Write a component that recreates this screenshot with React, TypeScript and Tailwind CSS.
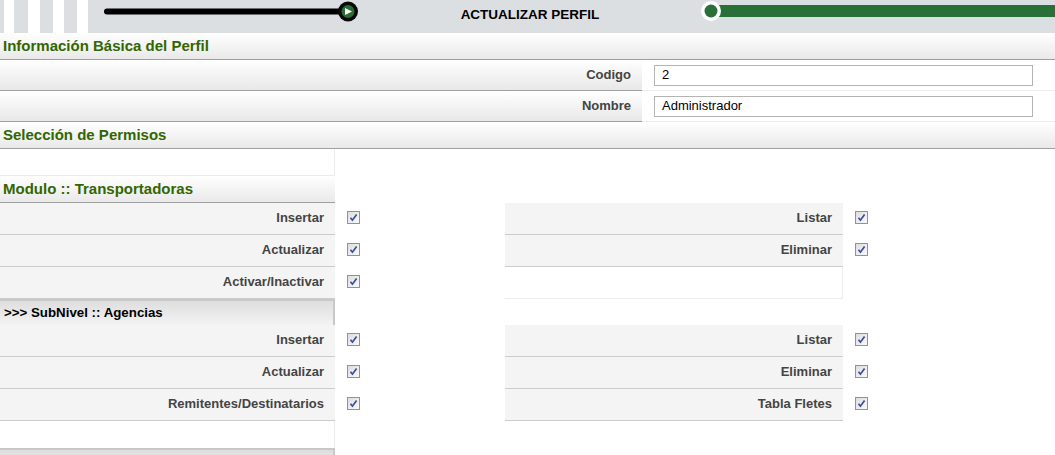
import React from 'react'

type Perm = { label: string } | null

function Check() {
  return (
    <svg width="13" height="13" viewBox="0 0 13 13">
      <defs>
        <linearGradient id="cbg" x1="0" y1="0" x2="1" y2="1">
          <stop offset="0" stopColor="#dcdcdc" />
          <stop offset="1" stopColor="#fbfbfb" />
        </linearGradient>
      </defs>
      <rect x="0.5" y="0.5" width="12" height="12" fill="url(#cbg)" stroke="#929292" />
      <path d="M3.5 6.8 L5.4 9.2 L9.6 3.4" fill="none" stroke="#3b4f9a" strokeWidth="1.7" />
    </svg>
  )
}

function Header({ title, wide }: { title: string; wide?: boolean }) {
  return (
    <div
      className={`flex items-center h-[27px] pl-[3px] border-b border-[#a0a0a0] bg-gradient-to-b from-white to-[#e9e9e9] text-[15px] font-bold text-[#336600] ${
        wide ? 'w-full' : 'w-[335px]'
      }`}
    >
      {title}
    </div>
  )
}

function SubHeader({ title }: { title: string }) {
  return (
    <div className="flex items-center h-[26px] w-[335px] pl-[4px] border-t-2 border-r-2 border-[#c8c8c8] bg-gradient-to-b from-[#dedede] to-[#f3f3f3] text-[13.3px] font-bold text-black">
      {title}
    </div>
  )
}

function PermRows({ rows }: { rows: [Perm, Perm][] }) {
  return (
    <div className="grid grid-cols-[335px_170px_338px_1fr]">
      {rows.map(([a, b], i) => (
        <React.Fragment key={i}>
          <div className="flex items-center justify-end h-[32px] pr-[11px] pb-[1px] bg-[#f4f4f4] border-b border-[#cccccc] text-[13px] font-bold text-[#444]">
            {a?.label}
          </div>
          <div className="flex items-center pl-[12px] pb-[3px] h-[32px]">{a && <Check />}</div>
          {b ? (
            <div className="flex items-center justify-end h-[32px] pr-[11px] pb-[1px] bg-[#f4f4f4] border-b border-[#cccccc] text-[13px] font-bold text-[#444]">
              {b.label}
            </div>
          ) : (
            <div className="h-[32px] bg-white border-b border-r border-[#ececec]" />
          )}
          <div className="flex items-center pl-[12px] pb-[3px] h-[32px]">{b && <Check />}</div>
        </React.Fragment>
      ))}
    </div>
  )
}

function Field({ label, value }: { label: string; value: string }) {
  return (
    <div className="flex h-[31px]">
      <div className="flex items-center justify-end w-[642px] pr-[11px] bg-gradient-to-b from-white to-[#e8e8e8] border-b border-[#a0a0a0] text-[13px] font-bold text-[#444]">
        {label}
      </div>
      <div className="flex-1 flex items-center pl-[12px] border-b border-[#ececec]">
        <div className="w-[379px] h-[21px] border border-[#b4b4b4] flex items-center pl-[7px] text-[13px] text-black">
          {value}
        </div>
      </div>
    </div>
  )
}

export default function App() {
  return (
    <div className="w-[1055px] h-[455px] overflow-hidden bg-white font-['Liberation_Sans',Arial,sans-serif]">
      {/* barra superior */}
      <div className="flex h-[33px] bg-[#dcdfe2]">
        <div className="flex h-full w-[100px]">
          <div className="ml-[4px] w-[10px] bg-white" />
          <div className="ml-[14px] w-[12px] bg-white" />
          <div className="ml-[13px] w-[11px] bg-white" />
          <div className="ml-[13px] w-[11px] bg-white" />
        </div>
        <svg width="260" height="33" viewBox="0 0 260 33">
          <line x1="7" y1="11.5" x2="240" y2="11.5" stroke="#000" strokeWidth="6" strokeLinecap="round" />
          <circle cx="248" cy="11.5" r="10" fill="#0a0a0a" />
          <circle cx="248" cy="11.5" r="6.5" fill="#2b6b35" />
          <path d="M245 8 L252 11.5 L245 15 Z" fill="#fff" />
        </svg>
        <div className="flex-1 flex items-center justify-center text-[13.5px] font-bold text-black pb-[2px]">
          ACTUALIZAR PERFIL
        </div>
        <svg width="355" height="33" viewBox="0 0 355 33">
          <rect x="18" y="5" width="337" height="12" fill="#287038" />
          <circle cx="11" cy="11" r="10" fill="#fff" />
          <circle cx="11" cy="11" r="6.5" fill="#287038" />
        </svg>
      </div>

      <Header title="Información Básica del Perfil" wide />
      <Field label="Codigo" value="2" />
      <Field label="Nombre" value="Administrador" />

      <Header title="Selección de Permisos" wide />
      <div className="h-[27px] w-[335px] border-r border-b border-[#ececec]" />

      <Header title="Modulo :: Transportadoras" />
      <PermRows
        rows={[
          [{ label: 'Insertar' }, { label: 'Listar' }],
          [{ label: 'Actualizar' }, { label: 'Eliminar' }],
          [{ label: 'Activar/Inactivar' }, null],
        ]}
      />

      <SubHeader title=">>> SubNivel :: Agencias" />
      <PermRows
        rows={[
          [{ label: 'Insertar' }, { label: 'Listar' }],
          [{ label: 'Actualizar' }, { label: 'Eliminar' }],
          [{ label: 'Remitentes/Destinatarios' }, { label: 'Tabla Fletes' }],
        ]}
      />
      <div className="h-[27px] w-[335px] border-r border-[#ececec]" />
      <SubHeader title="" />
    </div>
  )
}
